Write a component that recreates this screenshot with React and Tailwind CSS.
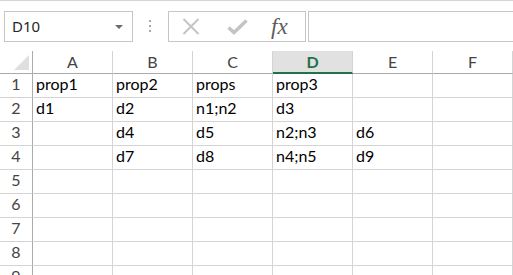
const columns = ["A", "B", "C", "D", "E", "F"];

const rows = [
  ["prop1", "prop2", "props", "prop3", "", ""],
  ["d1", "d2", "n1;n2", "d3", "", ""],
  ["", "d4", "d5", "n2;n3", "d6", ""],
  ["", "d7", "d8", "n4;n5", "d9", ""],
  ["", "", "", "", "", ""],
  ["", "", "", "", "", ""],
  ["", "", "", "", "", ""],
  ["", "", "", "", "", ""],
  ["", "", "", "", "", ""],
];

function Toolbar() {
  return (
    <div className="flex h-[51px] items-start border-t border-[#d5d5d5] pt-[10px]">
      <div className="ml-[4px] flex h-[31px] w-[129px] items-center justify-between border border-[#c6c6c6] pl-[7px] pr-[9px] font-['Noto_Sans',sans-serif] text-[15px] text-[#262626]">
        <span>D10</span>
        <span className="h-0 w-0 border-x-[4px] border-t-[4px] border-x-transparent border-t-[#6b6b6b]" />
      </div>
      <div className="ml-[16px] mt-[9px] flex flex-col gap-[3px]">
        <span className="h-[2px] w-[2px] bg-[#a8a8a8]" />
        <span className="h-[2px] w-[2px] bg-[#a8a8a8]" />
        <span className="h-[2px] w-[2px] bg-[#a8a8a8]" />
      </div>
      <div className="ml-[17px] flex h-[31px] w-[138px] items-center border border-[#c6c6c6]">
        <svg width="18" height="17" viewBox="0 0 18 17" className="ml-[13px]">
          <path d="M1.5 1 L16.5 16 M16.5 1 L1.5 16" stroke="#c4c4c4" strokeWidth="2" fill="none" />
        </svg>
        <svg width="21" height="16" viewBox="0 0 21 16" className="ml-[27px]">
          <path d="M1.5 8.5 L7 13.5 L19.5 1.5" stroke="#c4c4c4" strokeWidth="3.5" fill="none" />
        </svg>
        <span className="ml-[23px] font-['Liberation_Serif',serif] text-[23px] italic leading-none text-[#5c5c5c]">
          fx
        </span>
      </div>
      <div className="ml-[2px] h-[31px] flex-1 border-y border-l border-[#c6c6c6]" />
    </div>
  );
}

function Sheet() {
  return (
    <div className="grid grid-cols-[33px_80px_80px_80px_80px_80px_1fr] font-['Lato',sans-serif]">
      <div className="relative h-[23px] border-b border-r border-[#ababab]">
        <span className="absolute bottom-[3px] right-[3px] h-0 w-0 border-b-[15px] border-l-[15px] border-b-[#dfdfdf] border-l-transparent" />
      </div>
      {columns.map((col) =>
        col === "D" ? (
          <div
            key={col}
            className="flex h-[23px] items-center justify-center border-b-2 border-r border-b-[#217346] border-r-[#d4d4d4] bg-[#e1e1e1] pt-[1px] text-[16px] font-bold text-[#217346]"
          >
            {col}
          </div>
        ) : (
          <div
            key={col}
            className="flex h-[23px] items-center justify-center border-b border-r border-b-[#ababab] border-r-[#d4d4d4] text-[16px] text-[#444444]"
          >
            {col}
          </div>
        )
      )}
      {rows.map((row, i) => (
        <div key={i} className="contents">
          <div className="flex h-[24px] items-end justify-center border-b border-r border-b-[#d4d4d4] border-r-[#ababab] pb-[1px] text-[16px] text-[#444444]">
            {i + 1}
          </div>
          {row.map((value, j) => (
            <div
              key={j}
              className="flex h-[24px] items-end border-b border-r border-[#d4d4d4] pb-[1px] pl-[3px] text-[16px] text-black"
            >
              {value}
            </div>
          ))}
        </div>
      ))}
    </div>
  );
}

export default function App() {
  return (
    <div className="h-[275px] w-[513px] overflow-hidden bg-white">
      <Toolbar />
      <Sheet />
    </div>
  );
}
